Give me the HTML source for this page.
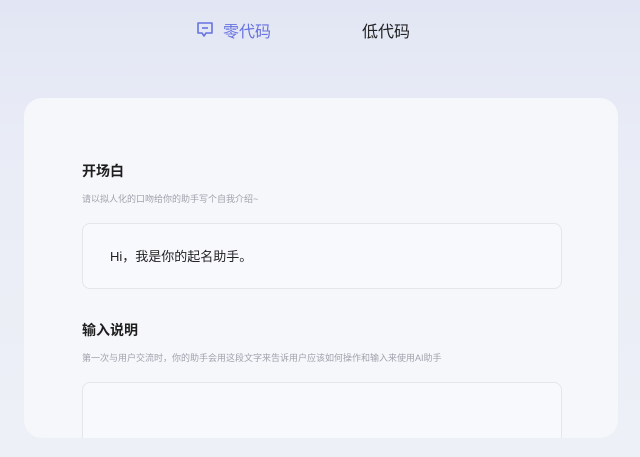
<!DOCTYPE html>
<html><head><meta charset="utf-8"><style>
html,body{margin:0;padding:0}
body{width:640px;height:457px;overflow:hidden;position:relative;background:linear-gradient(180deg,#e2e6f4 0%,#e9ecf6 30%,#eef0f7 100%);font-family:"Liberation Sans","Noto Sans CJK SC",sans-serif}
.tab{position:absolute;top:18px;font-size:16px}
.card{position:absolute;left:24px;top:98px;width:594px;height:340px;background:#f6f7fb;border-radius:18px;overflow:hidden}
.h{position:absolute;left:82px;font-size:14px;color:#1e1e1e;font-weight:bold}
.s{position:absolute;left:82px;font-size:9px;color:#a0a3ad}
.box{position:absolute;left:82px;width:478px;border:1px solid #e4e6ec;border-radius:8px;background:#f8f9fc}
</style></head><body>
<svg style="position:absolute;left:196px;top:21px" width="18" height="17" viewBox="0 0 18 17"><path d="M2 2h14v10h-6l-2 3-2-3H2z" fill="none" stroke="#6872e0" stroke-width="1.6" stroke-linejoin="round"/><path d="M6 7h6" stroke="#6872e0" stroke-width="1.6"/></svg>
<div class="tab" style="left:223px;color:#6872e0">零代码</div>
<div class="tab" style="left:362px;color:#222">低代码</div>
<div class="card"><div class="box" style="left:58px;top:284px;height:80px"></div></div>
<div class="h" style="top:161px">开场白</div>
<div class="s" style="top:192px">请以拟人化的口吻给你的助手写个自我介绍~</div>
<div class="box" style="top:223px;height:64px"></div>
<div style="position:absolute;left:110px;top:246px;font-size:13px;color:#222">Hi，我是你的起名助手。</div>
<div class="h" style="top:320px">输入说明</div>
<div class="s" style="top:351px">第一次与用户交流时，你的助手会用这段文字来告诉用户应该如何操作和输入来使用AI助手</div>
</body></html>
